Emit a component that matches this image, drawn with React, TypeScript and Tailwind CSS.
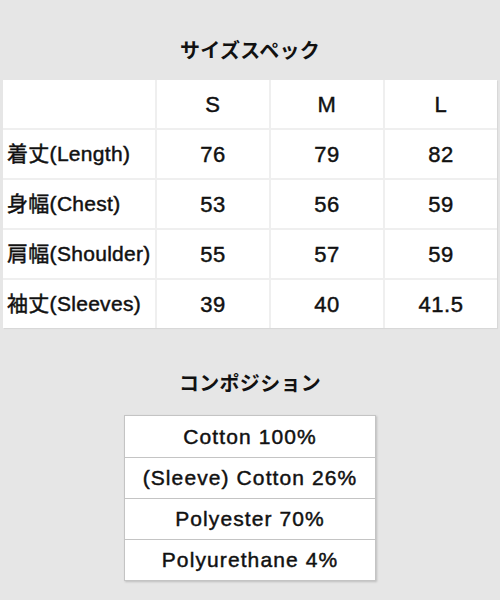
const sizes = ['S', 'M', 'L']

const rows = [
  { label: '着丈(Length)', values: ['76', '79', '82'] },
  { label: '身幅(Chest)', values: ['53', '56', '59'] },
  { label: '肩幅(Shoulder)', values: ['55', '57', '59'] },
  { label: '袖丈(Sleeves)', values: ['39', '40', '41.5'] },
]

const composition = ['Cotton 100%', '(Sleeve) Cotton 26%', 'Polyester 70%', 'Polyurethane 4%']

const font = "font-['Liberation_Sans','Noto_Sans_CJK_JP',sans-serif]"

function Heading({ children }: { children: string }) {
  return (
    <h2 className="h-7 text-center text-[20px] leading-7 font-bold text-[#111] tracking-[0.3px] font-['Noto_Sans_CJK_JP',sans-serif]">
      {children}
    </h2>
  )
}

export default function App() {
  return (
    <div className={`w-[500px] h-[600px] bg-[#e6e6e6] text-[#111] [-webkit-text-stroke:0.45px_#111] ${font}`}>
      <div className="pt-[36px] [-webkit-text-stroke:0]">
        <Heading>サイズスペック</Heading>
      </div>

      <div className="mx-[3px] mt-[16px] grid grid-cols-[152px_112px_112px_1fr] gap-[2px] bg-[#efefef] shadow-[1px_1px_1px_rgba(0,0,0,0.06)]">
        <div className="h-[48px] bg-white" />
        {sizes.map((s) => (
          <div key={s} className="h-[48px] bg-white flex items-center justify-center text-[22px] tracking-[0.6px]">
            {s}
          </div>
        ))}
        {rows.map((r) => (
          <>
            <div key={r.label} className="h-[48px] bg-white flex items-center pl-[4px] text-[21px] whitespace-nowrap tracking-[0.3px]">
              {r.label}
            </div>
            {r.values.map((v, i) => (
              <div key={r.label + i} className="h-[48px] bg-white flex items-center justify-center text-[22px] tracking-[0.6px]">
                {v}
              </div>
            ))}
          </>
        ))}
      </div>

      <div className="mt-[41px] [-webkit-text-stroke:0]">
        <Heading>コンポジション</Heading>
      </div>

      <div className="mx-auto mt-[18px] w-[252px] border border-[#c4c4c4] bg-white shadow-[1px_1px_2px_rgba(0,0,0,0.18)]">
        {composition.map((c, i) => (
          <div
            key={c}
            className={`h-[41px] flex items-center justify-center text-[21px] tracking-[1.1px] whitespace-nowrap ${i > 0 ? 'border-t border-[#c4c4c4]' : ''}`}
          >
            {c}
          </div>
        ))}
      </div>
    </div>
  )
}
